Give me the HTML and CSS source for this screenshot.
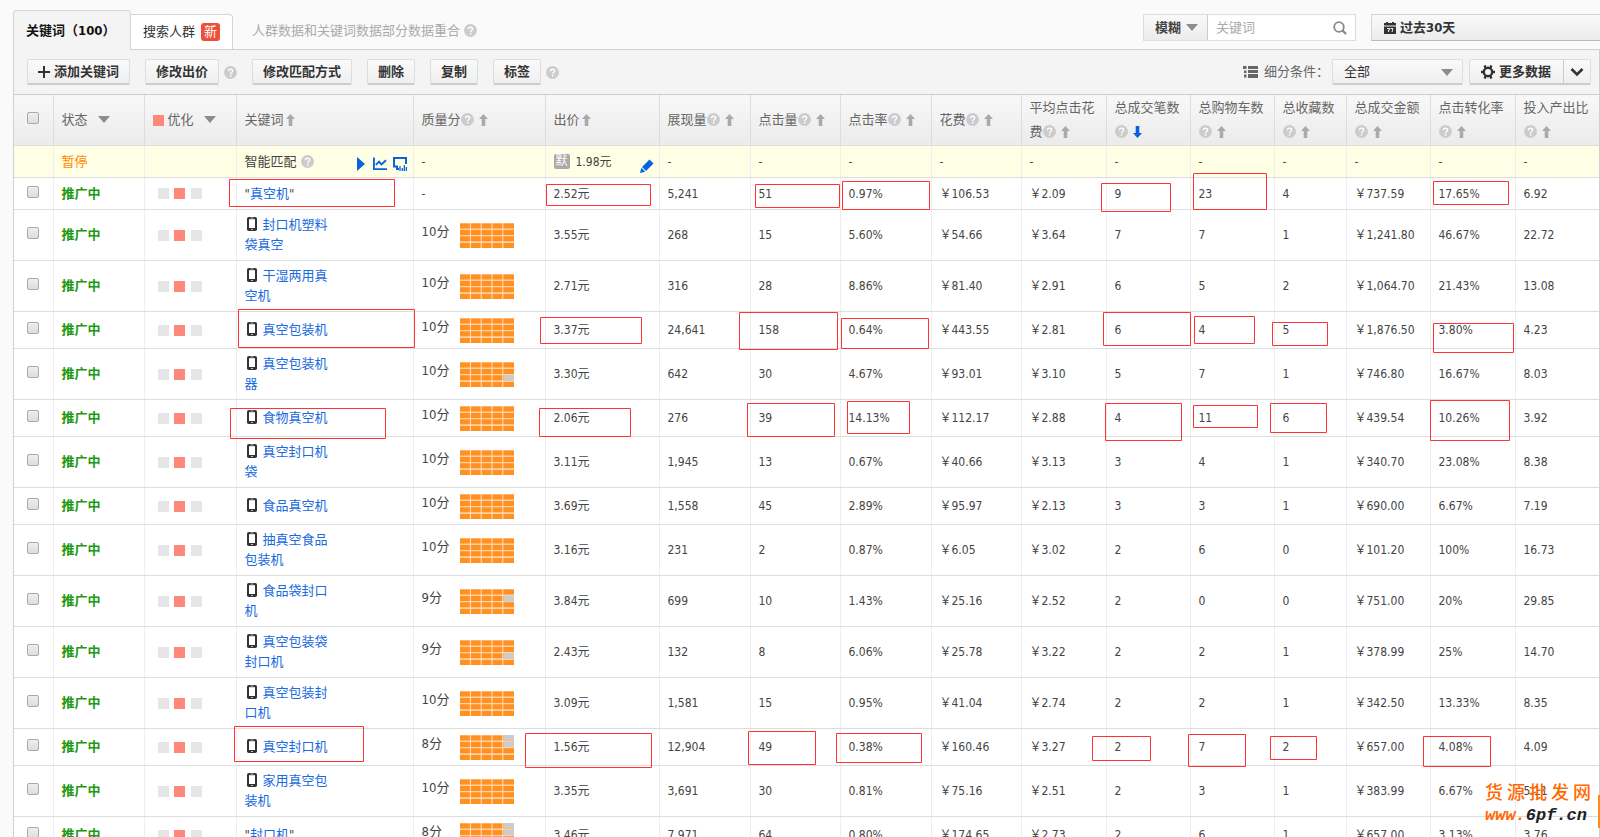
FILE: index.html
```html
<!DOCTYPE html>
<html lang="zh-CN">
<head>
<meta charset="utf-8">
<title>关键词</title>
<link rel="stylesheet" href="styles.css">
</head>
<body>
<svg class="defs" aria-hidden="true">
  <symbol id="help" viewBox="0 0 13 13"><circle cx="6.500" cy="6.500" r="6.500" fill="#ccc"/><path d="M4.500 5.200C4.500 2.600 8.600 2.600 8.600 5 8.600 6.500 6.600 6.500 6.600 8.200" fill="none" stroke="#fff" stroke-width="1.400"/><rect x="5.900" y="9.100" width="1.500" height="1.500" fill="#fff"/></symbol>
  <symbol id="up" viewBox="0 0 9 12"><path d="M4.500 0 9 5H6.300V12H2.700V5H0z" fill="currentColor"/></symbol>
  <symbol id="caret" viewBox="0 0 12 8"><path d="M0 0H12L6 7z" fill="#8c8c8c"/></symbol>
  <symbol id="phone" viewBox="0 0 10 14"><rect width="10" height="14" rx="1.800" fill="#333"/><rect x="2" y="2.200" width="6" height="8.800" fill="#fff"/><path d="M3.500 1H6.500M4 12.500H6" stroke="#bbb"/></symbol>
  <symbol id="grid" viewBox="0 0 54 25"><path d="M0 0H54V25H0z" fill="#ffd0a0"/><path d="M0 3H54M0 9.500H54M0 15.800H54M0 22.500H54" stroke="#ff9123" stroke-width="5"/><path d="M10.400 0V25M21.200 0V25M32 0V25M42.800 0V25" stroke="#ffe3c8"/></symbol>
  <symbol id="q10" viewBox="0 0 54 25"><use href="#grid"/></symbol>
  <symbol id="q9" viewBox="0 0 54 25"><use href="#grid"/><path d="M43.500 13H54V18.500H43.500z" fill="#ccc"/></symbol>
  <symbol id="q9b" viewBox="0 0 54 25"><use href="#grid"/><path d="M43.500 7H54V12.500H43.500z" fill="#ccc"/></symbol>
  <symbol id="q8" viewBox="0 0 54 25"><use href="#grid"/><path d="M43.500 0H54V5.500H43.500zM43.500 7H54V12H43.500z" fill="#ccc"/></symbol>
  <symbol id="opt" viewBox="0 0 44 11"><path d="M0 0H11V11H0zM33 0H44V11H33z" fill="#e6e6e6"/><path d="M16 0H27V11H16z" fill="#ff887b"/></symbol>
</svg>
<div class="page">
  <header class="top">
    <nav class="tabs">
      <a class="tab active" href="#kw">关键词（100）</a>
      <a class="tab" href="#crowd">搜索人群<span class="new">新</span></a>
    </nav>
    <p class="note">人群数据和关键词数据部分数据重合 <svg class="help"><use href="#help"/></svg></p>
    <form class="search">
      <label class="pick mode"><select aria-label="匹配方式"><option>模糊</option></select><svg class="caret"><use href="#caret"/></svg></label>
      <input class="query" type="text" placeholder="关键词" aria-label="关键词">
      <button class="go" type="button" aria-label="搜索"><svg viewBox="0 0 14 14"><circle cx="6" cy="6" r="4.800" fill="none" stroke="#888" stroke-width="1.800"/><path d="M9.500 9.500 13 13" stroke="#888" stroke-width="2.200"/></svg></button>
    </form>
    <button class="date" type="button"><svg viewBox="0 0 12 12"><path d="M0 1H2V0H4V1H8V0H10V1H12V3.500H0zM0 4.500H12V12H0z" fill="#333"/><path d="M3 6.500H5.500V8H4.500V10M6.500 6.500H9L8 10" fill="none" stroke="#eee"/></svg>过去30天</button>
  </header>
  <main class="panel" id="kw">
    <div class="toolbar">
      <button class="btn" type="button"><svg class="plus" viewBox="0 0 12 12"><path d="M6 0V12M0 6H12" stroke="#333" stroke-width="2"/></svg>添加关键词</button>
      <div class="pair"><button class="btn" type="button">修改出价</button><svg class="help"><use href="#help"/></svg></div>
      <button class="btn" type="button">修改匹配方式</button>
      <button class="btn" type="button">删除</button>
      <button class="btn" type="button">复制</button>
      <div class="pair"><button class="btn" type="button">标签</button><svg class="help"><use href="#help"/></svg></div>
      <div class="filter">
        <svg class="list" viewBox="0 0 15 12"><path d="M0 0H3.500V3H0zM5 0H15V3H5zM1 4.500H3.500V7H1zM5 4H15V7H5zM1 8.500H3.500V11.500H1zM5 8H15V12H5z" fill="#666"/></svg>
        <label for="seg">细分条件：</label>
        <span class="pick seg"><select id="seg"><option>全部</option></select><svg class="caret"><use href="#caret"/></svg></span>
        <div class="more"><button type="button"><svg viewBox="0 0 14 14"><circle cx="7" cy="7" r="4.200" fill="none" stroke="#333" stroke-width="2.400"/><path d="M3.500 0.500 5 3.500M10.500 0.500 9 3.500M0 7H3M11 7H14M3.500 13.500 5 10.500M10.500 13.500 9 10.500" stroke="#333" stroke-width="2.400"/></svg>更多数据</button><button type="button" aria-label="展开"><svg viewBox="0 0 14 14"><path d="M1.500 4 7 9.500 12.500 4" fill="none" stroke="#333" stroke-width="2.600"/></svg></button></div>
      </div>
    </div>
    <table class="data">
      <colgroup><col class="w39"><col class="w91"><col class="w92"><col class="w177"><col class="w132"><col class="w114"><col class="w91"><col class="w90"><col class="w91"><col class="w90"><col class="w85"><col class="w84"><col class="w84"><col class="w72"><col class="w84"><col class="w85"><col></colgroup>
      <thead>
        <tr>
          <th class="ck"><input type="checkbox" aria-label="全选"></th>
          <th><button class="menu" type="button">状态<svg class="caret"><use href="#caret"/></svg></button></th>
          <th><button class="menu" type="button"><i class="dot"></i>优化<svg class="caret"><use href="#caret"/></svg></button></th>
          <th>关键词<svg class="up near"><use href="#up"/></svg></th>
          <th>质量分<svg class="help"><use href="#help"/></svg><svg class="up"><use href="#up"/></svg></th>
          <th>出价<svg class="up near"><use href="#up"/></svg></th>
          <th>展现量<svg class="help"><use href="#help"/></svg><svg class="up"><use href="#up"/></svg></th>
          <th>点击量<svg class="help"><use href="#help"/></svg><svg class="up"><use href="#up"/></svg></th>
          <th>点击率<svg class="help"><use href="#help"/></svg><svg class="up"><use href="#up"/></svg></th>
          <th>花费<svg class="help"><use href="#help"/></svg><svg class="up"><use href="#up"/></svg></th>
          <th>平均点击花<br>费<svg class="help"><use href="#help"/></svg><svg class="up"><use href="#up"/></svg></th>
          <th>总成交笔数<br><svg class="help"><use href="#help"/></svg><svg class="up down" viewBox="0 0 9 12"><path d="M4.500 12 9 7H6.300V0H2.700V7H0z" fill="currentColor"/></svg></th>
          <th>总购物车数<br><svg class="help"><use href="#help"/></svg><svg class="up"><use href="#up"/></svg></th>
          <th>总收藏数<br><svg class="help"><use href="#help"/></svg><svg class="up"><use href="#up"/></svg></th>
          <th>总成交金额<br><svg class="help"><use href="#help"/></svg><svg class="up"><use href="#up"/></svg></th>
          <th>点击转化率<br><svg class="help"><use href="#help"/></svg><svg class="up"><use href="#up"/></svg></th>
          <th>投入产出比<br><svg class="help"><use href="#help"/></svg><svg class="up"><use href="#up"/></svg></th>
        </tr>
      </thead>
      <tbody>
        <tr class="smart"><td></td><td class="paused">暂停</td><td></td>
          <td><div class="auto"><span class="cjk">智能匹配</span><svg class="help"><use href="#help"/></svg><span class="ops"><svg class="play" viewBox="0 0 8 14"><path d="M0 0 8 7 0 14z" fill="#0a63de"/></svg><svg viewBox="0 0 15 14"><path d="M1 0V12.500H15" fill="none" stroke="#0a63de" stroke-width="2"/><path d="M3 8 6.500 4.500 9 7.500 14 3" fill="none" stroke="#0a63de" stroke-width="2"/></svg><svg viewBox="0 0 14 14"><path d="M6 12H4V9.500H1V1H13V7" fill="none" stroke="#0a63de" stroke-width="2"/><path d="M7 9V14M9.300 11V14M11.300 8V14M13.300 10V14" stroke="#0a63de" stroke-width="1.300"/></svg></span></div></td>
          <td>-</td>
          <td><div class="bid"><span class="badge">默</span>1.98元<svg class="pencil" viewBox="0 0 14 14"><path d="M9.500 0.500 13.500 4.500 6 12 2 8zM1.300 8.800 5.200 12.700 0 14z" fill="#0a63de"/></svg></div></td>
          <td>-</td><td>-</td><td>-</td><td>-</td><td>-</td><td>-</td><td>-</td><td>-</td><td>-</td><td>-</td><td>-</td></tr>
        <tr class="first"><td class="ck"><input type="checkbox" aria-label="真空机"></td><td class="on">推广中</td><td><svg class="opt"><use href="#opt"/></svg></td><td><div class="kw">"<a href="#k">真空机</a>"</div></td><td>-</td><td>2.52元</td><td>5,241</td><td>51</td><td>0.97%</td><td>￥106.53</td><td>￥2.09</td><td>9</td><td>23</td><td>4</td><td>￥737.59</td><td>17.65%</td><td>6.92</td></tr>
        <tr><td class="ck"><input type="checkbox" aria-label="封口机塑料袋真空"></td><td class="on">推广中</td><td><svg class="opt"><use href="#opt"/></svg></td><td><div class="kw"><svg class="phone"><use href="#phone"/></svg><a href="#k">封口机塑料袋真空</a></div></td><td><div class="score"><span>10分</span><svg><use href="#q10"/></svg></div></td><td>3.55元</td><td>268</td><td>15</td><td>5.60%</td><td>￥54.66</td><td>￥3.64</td><td>7</td><td>7</td><td>1</td><td>￥1,241.80</td><td>46.67%</td><td>22.72</td></tr>
        <tr><td class="ck"><input type="checkbox" aria-label="干湿两用真空机"></td><td class="on">推广中</td><td><svg class="opt"><use href="#opt"/></svg></td><td><div class="kw"><svg class="phone"><use href="#phone"/></svg><a href="#k">干湿两用真空机</a></div></td><td><div class="score"><span>10分</span><svg><use href="#q10"/></svg></div></td><td>2.71元</td><td>316</td><td>28</td><td>8.86%</td><td>￥81.40</td><td>￥2.91</td><td>6</td><td>5</td><td>2</td><td>￥1,064.70</td><td>21.43%</td><td>13.08</td></tr>
        <tr><td class="ck"><input type="checkbox" aria-label="真空包装机"></td><td class="on">推广中</td><td><svg class="opt"><use href="#opt"/></svg></td><td><div class="kw"><svg class="phone"><use href="#phone"/></svg><a href="#k">真空包装机</a></div></td><td><div class="score"><span>10分</span><svg><use href="#q10"/></svg></div></td><td>3.37元</td><td>24,641</td><td>158</td><td>0.64%</td><td>￥443.55</td><td>￥2.81</td><td>6</td><td>4</td><td>5</td><td>￥1,876.50</td><td>3.80%</td><td>4.23</td></tr>
        <tr><td class="ck"><input type="checkbox" aria-label="真空包装机器"></td><td class="on">推广中</td><td><svg class="opt"><use href="#opt"/></svg></td><td><div class="kw"><svg class="phone"><use href="#phone"/></svg><a href="#k">真空包装机器</a></div></td><td><div class="score"><span>10分</span><svg><use href="#q9"/></svg></div></td><td>3.30元</td><td>642</td><td>30</td><td>4.67%</td><td>￥93.01</td><td>￥3.10</td><td>5</td><td>7</td><td>1</td><td>￥746.80</td><td>16.67%</td><td>8.03</td></tr>
        <tr><td class="ck"><input type="checkbox" aria-label="食物真空机"></td><td class="on">推广中</td><td><svg class="opt"><use href="#opt"/></svg></td><td><div class="kw"><svg class="phone"><use href="#phone"/></svg><a href="#k">食物真空机</a></div></td><td><div class="score"><span>10分</span><svg><use href="#q10"/></svg></div></td><td>2.06元</td><td>276</td><td>39</td><td>14.13%</td><td>￥112.17</td><td>￥2.88</td><td>4</td><td>11</td><td>6</td><td>￥439.54</td><td>10.26%</td><td>3.92</td></tr>
        <tr><td class="ck"><input type="checkbox" aria-label="真空封口机袋"></td><td class="on">推广中</td><td><svg class="opt"><use href="#opt"/></svg></td><td><div class="kw"><svg class="phone"><use href="#phone"/></svg><a href="#k">真空封口机袋</a></div></td><td><div class="score"><span>10分</span><svg><use href="#q10"/></svg></div></td><td>3.11元</td><td>1,945</td><td>13</td><td>0.67%</td><td>￥40.66</td><td>￥3.13</td><td>3</td><td>4</td><td>1</td><td>￥340.70</td><td>23.08%</td><td>8.38</td></tr>
        <tr><td class="ck"><input type="checkbox" aria-label="食品真空机"></td><td class="on">推广中</td><td><svg class="opt"><use href="#opt"/></svg></td><td><div class="kw"><svg class="phone"><use href="#phone"/></svg><a href="#k">食品真空机</a></div></td><td><div class="score"><span>10分</span><svg><use href="#q10"/></svg></div></td><td>3.69元</td><td>1,558</td><td>45</td><td>2.89%</td><td>￥95.97</td><td>￥2.13</td><td>3</td><td>3</td><td>1</td><td>￥690.00</td><td>6.67%</td><td>7.19</td></tr>
        <tr><td class="ck"><input type="checkbox" aria-label="抽真空食品包装机"></td><td class="on">推广中</td><td><svg class="opt"><use href="#opt"/></svg></td><td><div class="kw"><svg class="phone"><use href="#phone"/></svg><a href="#k">抽真空食品包装机</a></div></td><td><div class="score"><span>10分</span><svg><use href="#q10"/></svg></div></td><td>3.16元</td><td>231</td><td>2</td><td>0.87%</td><td>￥6.05</td><td>￥3.02</td><td>2</td><td>6</td><td>0</td><td>￥101.20</td><td>100%</td><td>16.73</td></tr>
        <tr><td class="ck"><input type="checkbox" aria-label="食品袋封口机"></td><td class="on">推广中</td><td><svg class="opt"><use href="#opt"/></svg></td><td><div class="kw"><svg class="phone"><use href="#phone"/></svg><a href="#k">食品袋封口机</a></div></td><td><div class="score"><span>9分</span><svg><use href="#q9b"/></svg></div></td><td>3.84元</td><td>699</td><td>10</td><td>1.43%</td><td>￥25.16</td><td>￥2.52</td><td>2</td><td>0</td><td>0</td><td>￥751.00</td><td>20%</td><td>29.85</td></tr>
        <tr><td class="ck"><input type="checkbox" aria-label="真空包装袋封口机"></td><td class="on">推广中</td><td><svg class="opt"><use href="#opt"/></svg></td><td><div class="kw"><svg class="phone"><use href="#phone"/></svg><a href="#k">真空包装袋封口机</a></div></td><td><div class="score"><span>9分</span><svg><use href="#q9"/></svg></div></td><td>2.43元</td><td>132</td><td>8</td><td>6.06%</td><td>￥25.78</td><td>￥3.22</td><td>2</td><td>2</td><td>1</td><td>￥378.99</td><td>25%</td><td>14.70</td></tr>
        <tr><td class="ck"><input type="checkbox" aria-label="真空包装封口机"></td><td class="on">推广中</td><td><svg class="opt"><use href="#opt"/></svg></td><td><div class="kw"><svg class="phone"><use href="#phone"/></svg><a href="#k">真空包装封口机</a></div></td><td><div class="score"><span>10分</span><svg><use href="#q10"/></svg></div></td><td>3.09元</td><td>1,581</td><td>15</td><td>0.95%</td><td>￥41.04</td><td>￥2.74</td><td>2</td><td>2</td><td>1</td><td>￥342.50</td><td>13.33%</td><td>8.35</td></tr>
        <tr><td class="ck"><input type="checkbox" aria-label="真空封口机"></td><td class="on">推广中</td><td><svg class="opt"><use href="#opt"/></svg></td><td><div class="kw"><svg class="phone"><use href="#phone"/></svg><a href="#k">真空封口机</a></div></td><td><div class="score"><span>8分</span><svg><use href="#q8"/></svg></div></td><td>1.56元</td><td>12,904</td><td>49</td><td>0.38%</td><td>￥160.46</td><td>￥3.27</td><td>2</td><td>7</td><td>2</td><td>￥657.00</td><td>4.08%</td><td>4.09</td></tr>
        <tr><td class="ck"><input type="checkbox" aria-label="家用真空包装机"></td><td class="on">推广中</td><td><svg class="opt"><use href="#opt"/></svg></td><td><div class="kw"><svg class="phone"><use href="#phone"/></svg><a href="#k">家用真空包装机</a></div></td><td><div class="score"><span>10分</span><svg><use href="#q10"/></svg></div></td><td>3.35元</td><td>3,691</td><td>30</td><td>0.81%</td><td>￥75.16</td><td>￥2.51</td><td>2</td><td>3</td><td>1</td><td>￥383.99</td><td>6.67%</td><td>5.11</td></tr>
        <tr><td class="ck"><input type="checkbox" aria-label="封口机"></td><td class="on">推广中</td><td><svg class="opt"><use href="#opt"/></svg></td><td><div class="kw">"<a href="#k">封口机</a>"</div></td><td><div class="score"><span>8分</span><svg><use href="#q8"/></svg></div></td><td>3.46元</td><td>7,971</td><td>64</td><td>0.80%</td><td>￥174.65</td><td>￥2.73</td><td>2</td><td>6</td><td>1</td><td>￥657.00</td><td>3.13%</td><td>3.76</td></tr>
      </tbody>
    </table>
  </main>
  <svg class="marks" viewBox="0 0 1600 837" aria-hidden="true">
    <g fill="none" stroke="#f33">
      <path d="M229.500 179.500h165v27h-165zM546.500 184.500h104v21h-104zM755.500 184.500h84v23h-84zM842.500 181.500h87v28h-87zM1101.500 183.500h69v28h-69zM1193.500 173.500h73v36h-73zM1433.500 181.500h75v23h-75z"/>
      <path d="M238.500 309.500h176v38h-176zM540.500 317.500h101v26h-101zM739.500 312.500h98v37h-98zM841.500 318.500h87v30h-87zM1103.500 312.500h87v33h-87zM1194.500 316.500h60v27h-60zM1272.500 322.500h55v23h-55zM1433.500 323.500h80v29h-80z"/>
      <path d="M230.500 408.500h155v30h-155zM539.500 408.500h91v28h-91zM747.500 403.500h87v33h-87zM847.500 401.500h62v32h-62zM1105.500 403.500h76v37h-76zM1193.500 405.500h64v22h-64zM1270.500 403.500h56v29h-56zM1430.500 400.500h79v40h-79z"/>
      <path d="M234.500 726.500h129v35h-129zM525.500 733.500h126v34h-126zM748.500 731.500h67v33h-67zM836.500 733.500h85v29h-85zM1092.500 736.500h58v24h-58zM1188.500 734.500h57v32h-57zM1270.500 736.500h46v23h-46zM1423.500 736.500h67v30h-67z"/>
    </g>
  </svg>
  <div class="stamp"><div class="name"><span>货</span><span>源</span><span>批</span><span>发</span><span>网</span></div><div class="site"><b>www.</b>6pf.cn</div></div>
  <i class="edge"></i>
</div>
</body>
</html>
```
FILE: styles.css
```css
* { box-sizing: border-box; }
body {
  margin: 0;
  background: #fafafa;
  color: #444;
  font: 12px/20px "DejaVu Sans Condensed", "Noto Sans CJK SC", sans-serif;
}
svg { flex: none; }
a { text-decoration: none; }
button, select, input { font: inherit; color: inherit; margin: 0; }
button { cursor: pointer; }
.defs { position: absolute; width: 0; height: 0; }
.page { position: relative; height: 100vh; overflow: hidden; padding: 10px 0 0 13px; }
.help { width: 13px; height: 13px; vertical-align: -2px; }
.caret { width: 12px; height: 8px; }

.top { display: flex; align-items: flex-end; height: 39px; font-size: 13px; }
.tabs { display: flex; align-items: flex-end; }
.tab {
  display: flex; align-items: center; gap: 6px;
  height: 35px; padding: 0 12px;
  border: 1px solid #d5d5d5; border-bottom: 0; border-left: 0;
  border-radius: 0 4px 0 0; background: #fff; color: #333;
}
.tab.active {
  position: relative; width: 118px; height: 40px; margin-bottom: -1px;
  border-left: 1px solid #d5d5d5; border-radius: 4px 4px 0 0;
  background: #f4f4f4; color: #111; font-weight: bold; white-space: nowrap;
}
.new { padding: 0 3px; border-radius: 3px; background: #ee4f38; color: #fff; line-height: 18px; }
.note { flex: 1; margin: 0 0 8px 19px; color: #aaa; }
.search { display: flex; align-self: flex-start; width: 213px; height: 27px; margin: 4px 15px 0 0; border: 1px solid #ddd; background: #fff; }
.pick { position: relative; display: flex; background: linear-gradient(#f9f9f9, #ececec); }
.pick select { width: 100%; appearance: none; border: 0; background: none; padding: 0 11px; }
.pick .caret { position: absolute; right: 9px; top: 9px; }
.mode { width: 64px; border-right: 1px solid #ccc; font-weight: bold; }
.query { flex: 1; min-width: 0; border: 0; padding: 0 8px; background: none; outline: 0; }
.query::placeholder { color: #aaa; }
.go { display: flex; align-items: center; border: 0; padding: 0 8px; background: none; }
.go svg { width: 14px; height: 14px; }
.date {
  display: flex; align-items: center; gap: 4px; align-self: flex-start;
  width: 229px; height: 27px; margin-top: 4px; padding: 0 12px;
  border: 1px solid #d5d5d5; border-bottom-color: #bbb; border-right: 0;
  background: linear-gradient(#f9f9f9, #ececec); font-weight: bold; color: #333;
}
.date svg { width: 12px; height: 12px; }

.panel { border: 1px solid #d0d0d0; background: #fff; }
.toolbar { display: flex; align-items: center; gap: 15px; height: 44px; padding: 0 8px 0 13px; background: #f4f4f4; font-size: 13px; }
.btn, .seg, .more {
  height: 26px; border: 1px solid #ddd; border-bottom: 2px solid #ccc; border-radius: 2px;
  background: linear-gradient(#fafafa, #efefef); color: #333;
}
.btn { display: flex; align-items: center; gap: 4px; padding: 0 10px; font-weight: bold; white-space: nowrap; }
.plus { width: 12px; height: 12px; }
.pair { display: flex; align-items: center; gap: 5px; }
.filter { display: flex; align-items: center; margin-left: auto; color: #666; }
.list { width: 15px; height: 12px; margin-right: 6px; }
.seg { width: 131px; margin: 0 6px 0 3px; }
.more { display: flex; font-weight: bold; }
.more button { display: flex; align-items: center; gap: 4px; border: 0; background: none; padding: 0 12px 0 11px; font-weight: bold; }
.more button + button { border-left: 1px solid #ccc; padding: 0 6px; }
.more svg { width: 14px; height: 14px; }

.data { width: 100%; table-layout: fixed; border-collapse: collapse; }
.w39 { width: 39px; } .w72 { width: 72px; } .w84 { width: 84px; } .w85 { width: 85px; }
.w90 { width: 90px; } .w91 { width: 91px; } .w92 { width: 92px; } .w114 { width: 114px; }
.w132 { width: 132px; } .w177 { width: 177px; }
.data th, .data td { padding: 0 0 0 8px; text-align: left; vertical-align: middle; white-space: nowrap; border-left: 1px solid #eee; border-bottom: 1px solid #ddd; }
.data th:first-child, .data td:first-child { border-left: 0; }
.data th { height: 51px; border-top: 1px solid #ccc; border-left-color: #ddd; font-size: 13px; line-height: 24px; font-weight: normal; color: #666; }
.data thead tr { background: linear-gradient(#f8f8f8, #ebebeb); }
.data td { height: 37px; }
.data .smart td { height: 32px; background: #ffffe5; }
.data .first td { height: 32px; }
.data .ck { padding-left: 13px; }
.ck input {
  display: block; appearance: none; width: 12px; height: 12px; margin-bottom: 4px;
  border: 1px solid #aaa; border-radius: 2px; background: linear-gradient(#eee, #ddd);
}
.menu { display: flex; align-items: center; border: 0; padding: 0; background: none; }
.menu .caret { margin-left: 10px; }
.dot { width: 11px; height: 11px; margin-right: 4px; background: #ff887b; }
.up { width: 9px; height: 12px; margin-left: 5px; color: #aaa; vertical-align: -2px; }
.near { margin-left: 2px; }
.down { color: #0a63de; }
.data .paused { color: #ff8800; font-size: 13px; }
.data .on { color: #229911; font-size: 13px; font-weight: bold; }
.opt { display: block; width: 44px; height: 11px; margin-left: 5px; }
.kw { width: 84px; padding: 5px 0; white-space: normal; font-size: 13px; line-height: 20px; }
.first .kw { padding: 0; }
.kw a { color: #1a6ae0; }
.phone { width: 10px; height: 14px; margin: 0 6px 0 2px; vertical-align: -2px; }
.score { display: flex; align-items: center; }
.score span { width: 38px; font-size: 13px; padding-bottom: 6px; }
.score svg { width: 54px; height: 25px; }
.auto, .bid { display: flex; align-items: center; gap: 4px; }
.cjk { font-size: 13px; }
.ops { display: flex; gap: 6px; margin: 4px 6px 0 auto; }
.ops svg { width: 14px; height: 14px; }
.ops .play { width: 8px; margin-right: 2px; }
.badge { width: 16px; height: 15px; margin-right: 2px; border-radius: 2px; background: #aaa; color: #fff; line-height: 15px; text-align: center; }
.pencil { width: 14px; height: 14px; margin: 8px 5px 0 auto; }

.marks { position: absolute; left: 0; top: 0; width: 1600px; height: 837px; pointer-events: none; }
.stamp { position: absolute; left: 1485px; top: 781px; width: 106px; color: #ff6a00; line-height: 23px; }
.name { display: flex; justify-content: space-between; font-size: 18px; font-weight: 500; }
.site { color: #222; font: italic bold 17px/23px "Liberation Mono", monospace; }
.site b { color: #ff6a00; }
.edge { position: absolute; right: 0; top: 795px; width: 2px; height: 33px; background: #ff8a1c; }
```
